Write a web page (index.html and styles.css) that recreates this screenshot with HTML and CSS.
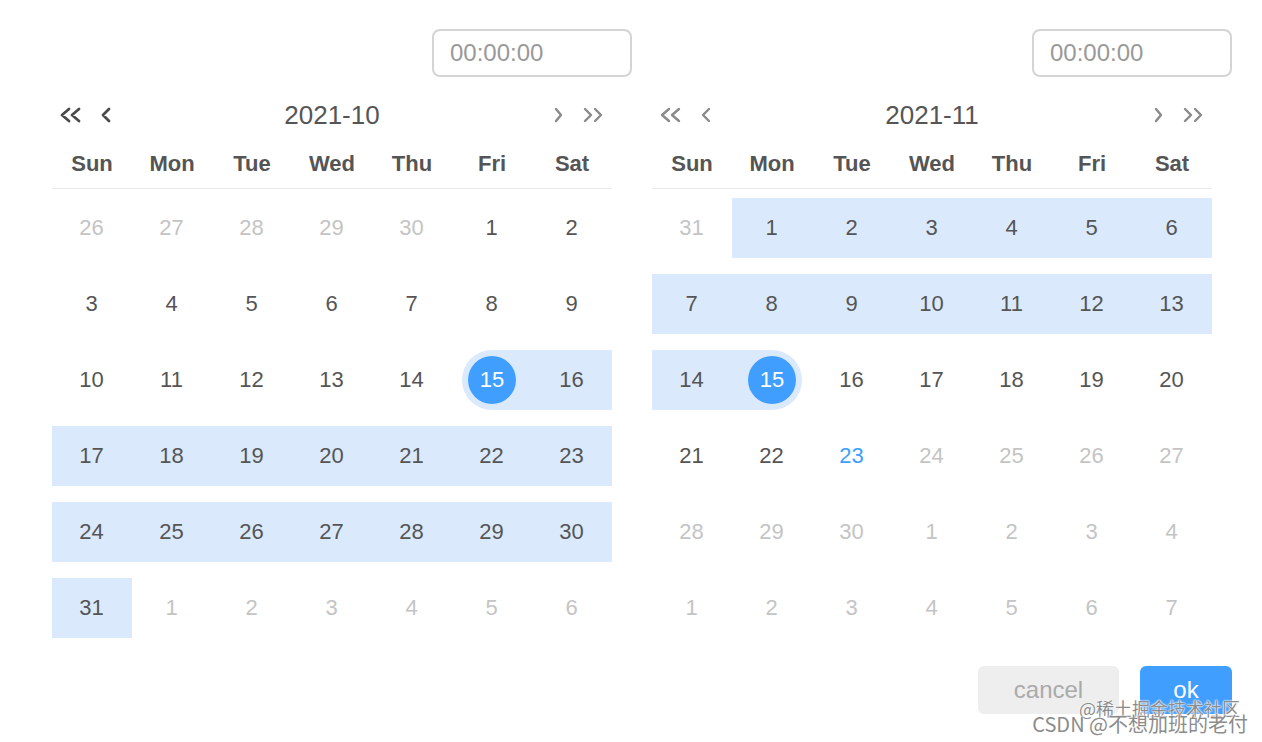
FILE: index.html
```html
<!DOCTYPE html>
<html>
<head>
<meta charset="utf-8">
<link rel="stylesheet" href="styles.css">
</head>
<body>
<div class="page">
  <div class="picker">
    <div class="panel">
      <div class="time-row"><div class="time-input">00:00:00</div></div>
      <div class="head">
        <div class="nav nav-left dark">
          <svg width="60" height="16" viewBox="0 0 60 16"><path d="M17 2 L10 8 L17 14 M27 2 L20 8 L27 14 M57 2 L51 8 L57 14" fill="none" stroke="currentColor" stroke-width="2.8" stroke-linecap="round" stroke-linejoin="round"/></svg>
        </div>
        <div class="title">2021-10</div>
        <div class="nav nav-right">
          <svg width="60" height="16" viewBox="0 0 60 16"><path d="M4 2 L9 8 L4 14 M33 2 L39 8 L33 14 M43 2 L49 8 L43 14" fill="none" stroke="currentColor" stroke-width="2.4" stroke-linecap="round" stroke-linejoin="round"/></svg>
        </div>
      </div>
      <div class="weekdays"><span>Sun</span><span>Mon</span><span>Tue</span><span>Wed</span><span>Thu</span><span>Fri</span><span>Sat</span></div>
      <div class="days">
        <div class="cell gray">26</div><div class="cell gray">27</div><div class="cell gray">28</div><div class="cell gray">29</div><div class="cell gray">30</div><div class="cell">1</div><div class="cell">2</div>
        <div class="cell">3</div><div class="cell">4</div><div class="cell">5</div><div class="cell">6</div><div class="cell">7</div><div class="cell">8</div><div class="cell">9</div>
        <div class="cell">10</div><div class="cell">11</div><div class="cell">12</div><div class="cell">13</div><div class="cell">14</div><div class="cell sel start"><span class="dot">15</span></div><div class="cell range">16</div>
        <div class="cell range">17</div><div class="cell range">18</div><div class="cell range">19</div><div class="cell range">20</div><div class="cell range">21</div><div class="cell range">22</div><div class="cell range">23</div>
        <div class="cell range">24</div><div class="cell range">25</div><div class="cell range">26</div><div class="cell range">27</div><div class="cell range">28</div><div class="cell range">29</div><div class="cell range">30</div>
        <div class="cell range">31</div><div class="cell gray">1</div><div class="cell gray">2</div><div class="cell gray">3</div><div class="cell gray">4</div><div class="cell gray">5</div><div class="cell gray">6</div>
      </div>
    </div>
    <div class="panel">
      <div class="time-row"><div class="time-input">00:00:00</div></div>
      <div class="head">
        <div class="nav nav-left">
          <svg width="60" height="16" viewBox="0 0 60 16"><path d="M17 2 L10 8 L17 14 M27 2 L20 8 L27 14 M57 2 L51 8 L57 14" fill="none" stroke="currentColor" stroke-width="2.4" stroke-linecap="round" stroke-linejoin="round"/></svg>
        </div>
        <div class="title">2021-11</div>
        <div class="nav nav-right">
          <svg width="60" height="16" viewBox="0 0 60 16"><path d="M4 2 L9 8 L4 14 M33 2 L39 8 L33 14 M43 2 L49 8 L43 14" fill="none" stroke="currentColor" stroke-width="2.4" stroke-linecap="round" stroke-linejoin="round"/></svg>
        </div>
      </div>
      <div class="weekdays"><span>Sun</span><span>Mon</span><span>Tue</span><span>Wed</span><span>Thu</span><span>Fri</span><span>Sat</span></div>
      <div class="days">
        <div class="cell gray">31</div><div class="cell range">1</div><div class="cell range">2</div><div class="cell range">3</div><div class="cell range">4</div><div class="cell range">5</div><div class="cell range">6</div>
        <div class="cell range">7</div><div class="cell range">8</div><div class="cell range">9</div><div class="cell range">10</div><div class="cell range">11</div><div class="cell range">12</div><div class="cell range">13</div>
        <div class="cell range">14</div><div class="cell sel end"><span class="dot">15</span></div><div class="cell">16</div><div class="cell">17</div><div class="cell">18</div><div class="cell">19</div><div class="cell">20</div>
        <div class="cell">21</div><div class="cell">22</div><div class="cell today">23</div><div class="cell gray">24</div><div class="cell gray">25</div><div class="cell gray">26</div><div class="cell gray">27</div>
        <div class="cell gray">28</div><div class="cell gray">29</div><div class="cell gray">30</div><div class="cell gray">1</div><div class="cell gray">2</div><div class="cell gray">3</div><div class="cell gray">4</div>
        <div class="cell gray">1</div><div class="cell gray">2</div><div class="cell gray">3</div><div class="cell gray">4</div><div class="cell gray">5</div><div class="cell gray">6</div><div class="cell gray">7</div>
      </div>
    </div>
  </div>
  <div class="footer">
    <button class="btn cancel">cancel</button>
    <button class="btn ok">ok</button>
  </div>
  <div class="watermark">
    <div class="wm1">@稀土掘金技术社区</div>
    <div class="wm2">CSDN @不想加班的老付</div>
  </div>
</div>
</body>
</html>
```

FILE: styles.css
```css
html, body {
  margin: 0;
  padding: 0;
  background: #ffffff;
}
body {
  font-family: "Liberation Sans", Arial, "Noto Sans CJK SC", sans-serif;
  color: #555555;
}
.page {
  position: relative;
  width: 1262px;
  height: 742px;
  overflow: hidden;
}
.picker {
  display: flex;
  gap: 20px;
  padding: 29px 0 0 52px;
}
.panel {
  width: 580px;
}
.time-row {
  display: flex;
  justify-content: flex-end;
}
.time-input {
  box-sizing: border-box;
  width: 200px;
  height: 48px;
  border: 2px solid #d4d4d4;
  border-radius: 8px;
  display: flex;
  align-items: center;
  padding-left: 16px;
  font-size: 24px;
  color: #999999;
}
.head {
  width: 560px;
  height: 36px;
  margin-top: 20px;
  display: grid;
  grid-template-columns: 1fr auto 1fr;
  align-items: center;
}
.nav {
  display: flex;
  align-items: center;
  color: #8a8a8a;
}
.nav.dark {
  color: #4a4a4a;
}
.nav-left {
  justify-self: start;
}
.nav-right {
  justify-self: end;
}
.title {
  font-size: 26px;
  color: #555555;
}
.weekdays {
  width: 560px;
  margin-top: 11px;
  display: grid;
  grid-template-columns: repeat(7, 80px);
  height: 40px;
  line-height: 40px;
  padding-bottom: 4px;
  border-bottom: 1px solid #eaeaea;
  font-size: 22px;
  font-weight: bold;
  color: #555555;
  text-align: center;
}
.days {
  width: 560px;
  margin-top: 9px;
  display: grid;
  grid-template-columns: repeat(7, 80px);
  grid-auto-rows: 60px;
  row-gap: 16px;
}
.cell {
  display: flex;
  align-items: center;
  justify-content: center;
  font-size: 22px;
  color: #555555;
  padding-right: 1px;
}
.cell.gray {
  color: #c4c4c4;
}
.cell.today {
  color: #409eff;
}
.cell.range {
  background: #daeafc;
}
.cell.sel {
  padding-right: 0;
}
.cell.sel.start {
  background: linear-gradient(to right, transparent 50%, #daeafc 50%);
}
.cell.sel.end {
  background: linear-gradient(to right, #daeafc 50%, transparent 50%);
}
.dot {
  width: 48px;
  height: 48px;
  border-radius: 50%;
  background: #409eff;
  box-shadow: 0 0 0 6px #daeafc;
  color: #ffffff;
  display: flex;
  align-items: center;
  justify-content: center;
}
.footer {
  display: flex;
  justify-content: flex-end;
  gap: 21px;
  padding-right: 30px;
  margin-top: 28px;
}
.btn {
  height: 48px;
  border: none;
  border-radius: 6px;
  font-family: "Liberation Sans", Arial, sans-serif;
  font-size: 24px;
  padding: 0;
}
.btn.cancel {
  width: 141px;
  background: #eeeeee;
  color: #aaaaaa;
}
.btn.ok {
  width: 92px;
  background: #409eff;
  color: #ffffff;
}
.watermark {
  position: absolute;
  right: 14px;
  bottom: 8px;
  display: flex;
  flex-direction: column;
  align-items: flex-end;
  font-family: "Noto Sans CJK SC", "DejaVu Sans", sans-serif;
  color: #8c8c8c;
  text-shadow: 0 0 2px #ffffff, 0 0 2px #ffffff, 0 0 1px #ffffff;
  line-height: 1;
}
.wm1 {
  font-size: 18px;
  margin-right: 8px;
  margin-bottom: -3px;
}
.wm2 {
  font-size: 20px;
}
```
